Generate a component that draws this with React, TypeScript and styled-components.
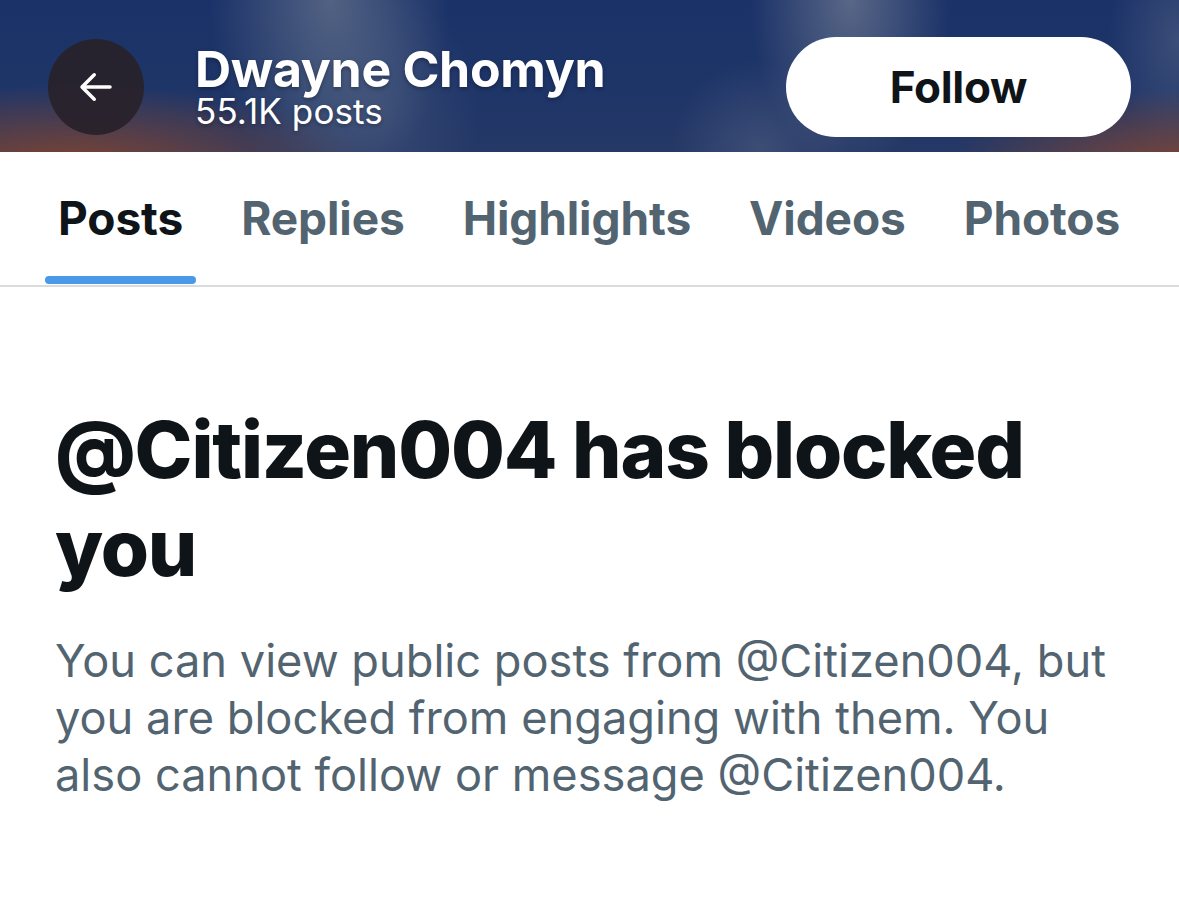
import React from "react";
import styled, { createGlobalStyle } from "styled-components";

const Global = createGlobalStyle`
  html, body { margin: 0; padding: 0; background: #ffffff; }
  body { font-family: "Inter", "Noto Sans", sans-serif; -webkit-font-smoothing: antialiased; }
  * { box-sizing: border-box; }
`;

const Page = styled.div`
  width: 1179px;
  height: 914px;
  background: #fff;
  overflow: hidden;
  display: flex;
  flex-direction: column;
`;

const Header = styled.header`
  height: 152px;
  display: flex;
  align-items: center;
  padding: 22px 48px 0 48px;
  background:
    radial-gradient(ellipse 300px 80px at 70px 165px, rgba(130, 68, 46, 0.95), rgba(130, 68, 46, 0) 100%),
    radial-gradient(ellipse 230px 75px at 1179px 165px, rgba(128, 70, 52, 0.95), rgba(128, 70, 52, 0) 100%),
    radial-gradient(ellipse 120px 190px at 330px 0px, rgba(100, 114, 140, 0.75), rgba(100, 114, 140, 0) 100%),
    radial-gradient(ellipse 100px 120px at 380px 110px, rgba(80, 96, 130, 0.45), rgba(80, 96, 130, 0) 100%),
    radial-gradient(ellipse 100px 170px at 850px 0px, rgba(104, 116, 142, 0.8), rgba(104, 116, 142, 0) 100%),
    radial-gradient(ellipse 90px 90px at 760px 150px, rgba(84, 98, 132, 0.5), rgba(84, 98, 132, 0) 100%),
    radial-gradient(ellipse 70px 120px at 1179px 40px, rgba(90, 104, 136, 0.5), rgba(90, 104, 136, 0) 100%),
    linear-gradient(to bottom, #1b3269 0%, #1e3568 55%, #253866 100%);
`;

const BackButton = styled.button`
  width: 96px;
  height: 96px;
  border-radius: 50%;
  border: none;
  background: rgba(40, 34, 42, 0.94);
  display: flex;
  align-items: center;
  justify-content: center;
  padding: 0;
  flex-shrink: 0;
`;

const TitleBlock = styled.div`
  display: flex;
  flex-direction: column;
  margin-left: 51px;
  margin-top: -2px;
  color: #fff;
`;

const Name = styled.div`
  font-size: 50px;
  font-weight: 700;
  line-height: 50px;
  letter-spacing: -0.3px;
  text-shadow: 0 2px 4px rgba(0, 0, 0, 0.3);
`;

const Count = styled.div`
  font-size: 35px;
  font-weight: 400;
  line-height: 34px;
  letter-spacing: 0.1px;
  text-shadow: 0 2px 4px rgba(0, 0, 0, 0.3);
`;

const FollowButton = styled.button`
  margin-left: auto;
  width: 345px;
  height: 100px;
  border-radius: 50px;
  border: none;
  background: #fff;
  color: #0f1419;
  font-family: "Inter", sans-serif;
  font-size: 44px;
  font-weight: 700;
  letter-spacing: -0.3px;
  padding: 0;
`;

const Tabs = styled.nav`
  display: flex;
  gap: 32px;
  padding: 0 0 0 45px;
  height: 135px;
  border-bottom: 2px solid #d9dcdf;
`;

const Tab = styled.div<{ $active?: boolean }>`
  position: relative;
  padding: 38px 13px 0 13px;
  font-size: 46px;
  line-height: 56px;
  font-weight: 700;
  letter-spacing: -0.1px;
  white-space: nowrap;
  color: ${(p) => (p.$active ? "#0f1419" : "#536471")};
`;

const Indicator = styled.span`
  position: absolute;
  left: 0;
  right: 0;
  bottom: 1px;
  height: 8px;
  border-radius: 4px;
  background: #4a99e9;
`;

const Content = styled.main`
  padding: 114px 60px 0 55px;
`;

const Heading = styled.h1`
  margin: 0;
  font-size: 78px;
  font-weight: 800;
  line-height: 98px;
  letter-spacing: -1.2px;
  color: #0f1419;
`;

const Body = styled.p`
  margin: 35px 0 0 0;
  font-size: 45.2px;
  font-weight: 400;
  line-height: 57px;
  letter-spacing: 0px;
  color: #536471;
`;

const tabs: { label: string; active?: boolean }[] = [
  { label: "Posts", active: true },
  { label: "Replies" },
  { label: "Highlights" },
  { label: "Videos" },
  { label: "Photos" },
];

export default function App() {
  return (
    <>
      <Global />
      <Page>
        <Header>
          <BackButton aria-label="Back">
            <svg width="42" height="42" viewBox="0 0 24 24" fill="none">
              <path
                d="M20 12H4.5M11 5l-7 7 7 7"
                stroke="#fff"
                strokeWidth="2"
                strokeLinecap="round"
                strokeLinejoin="round"
              />
            </svg>
          </BackButton>
          <TitleBlock>
            <Name>Dwayne Chomyn</Name>
            <Count>55.1K posts</Count>
          </TitleBlock>
          <FollowButton>Follow</FollowButton>
        </Header>
        <Tabs>
          {tabs.map((t) => (
            <Tab key={t.label} $active={t.active}>
              {t.label}
              {t.active && <Indicator />}
            </Tab>
          ))}
        </Tabs>
        <Content>
          <Heading>@Citizen004 has blocked you</Heading>
          <Body>
            You can view public posts from @Citizen004, but you are blocked from engaging with them. You
            also cannot follow or message @Citizen004.
          </Body>
        </Content>
      </Page>
    </>
  );
}
